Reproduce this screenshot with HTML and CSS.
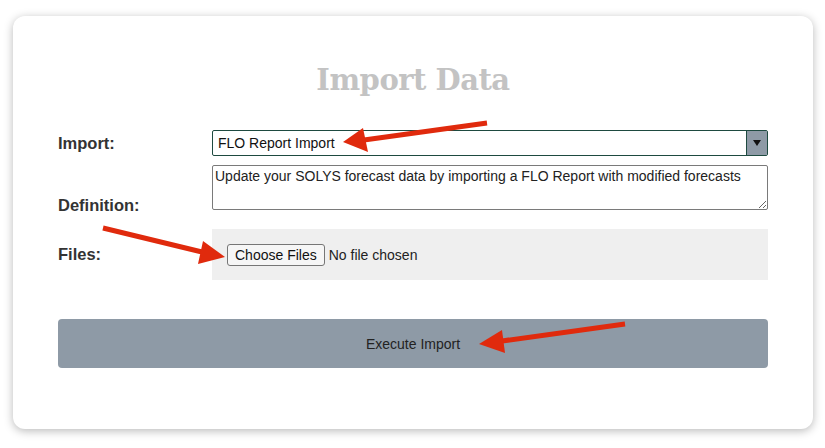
FILE: index.html
```html
<!DOCTYPE html>
<html lang="en">
<head>
    <meta charset="UTF-8">
    <meta name="viewport" content="width=device-width, initial-scale=1.0">
    <title>Import Data</title>
    <link rel="stylesheet" href="styles.css">
</head>
<body>
    <div class="page">
        <div class="card">
            <h1 class="card-title">Import Data</h1>

            <div class="form-row row-import">
                <label for="importType">Import:</label>
                <div class="select-box">
                    <select id="importType">
                        <option value="flo">FLO Report Import</option>
                    </select>
                    <span class="select-arrow"></span>
                </div>
            </div>

            <div class="form-row row-definition">
                <label for="definition" class="label-bottom">Definition:</label>
                <textarea id="definition" readonly>Update your SOLYS forecast data by importing a FLO Report with modified forecasts</textarea>
            </div>

            <div class="form-row row-files">
                <label for="files">Files:</label>
                <div class="files-box">
                    <input type="file" id="files" multiple>
                </div>
            </div>

            <button class="execute-btn" type="button">Execute Import</button>
        </div>

        <!-- стрелки-подсказки поверх формы -->
        <svg class="arrows" width="825" height="448" viewBox="0 0 825 448">
            <g fill="#e02a0d" stroke="#e02a0d" stroke-width="5" stroke-linecap="butt">
                <line x1="487" y1="123" x2="364" y2="140"/>
                <polygon points="343,142 363,128 368,152" stroke="none"/>

                <line x1="103" y1="228" x2="202" y2="252"/>
                <polygon points="225,257 203,241 198,264" stroke="none"/>

                <line x1="625" y1="324" x2="502" y2="341"/>
                <polygon points="479,344 502,330 505,353" stroke="none"/>
            </g>
        </svg>
    </div>
</body>
</html>
```

FILE: styles.css
```css
* {
    box-sizing: border-box;
    margin: 0;
    padding: 0;
}

body {
    font-family: 'Liberation Sans', Arial, sans-serif;
    background-color: #ffffff;
    color: #333333;
}

.page {
    position: relative;
    width: 825px;
    height: 448px;
    padding: 16px 0 0 13px;
}

.card {
    width: 800px;
    height: 413px;
    background-color: #ffffff;
    border-radius: 12px;
    box-shadow: 0 2px 10px rgba(0, 0, 0, 0.28);
    padding: 46px 45px 0 45px;
}

.card-title {
    font-family: 'DejaVu Serif', 'Liberation Serif', serif;
    font-size: 29px;
    line-height: 36px;
    font-weight: bold;
    color: #c3c3c3;
    text-align: center;
    letter-spacing: -0.5px;
    margin-bottom: 32px;
}

.form-row {
    display: grid;
    grid-template-columns: 154px 1fr;
    align-items: center;
}

.form-row label {
    font-size: 16.5px;
    font-weight: bold;
    color: #333333;
}

.row-import {
    margin-bottom: 9px;
}

.row-definition {
    margin-bottom: 19px;
}

.label-bottom {
    align-self: end;
    line-height: 18px;
    margin-bottom: -4px;
}

/* селект */
.select-box {
    display: flex;
    height: 26px;
    border: 1px solid #1e4a40;
    border-radius: 2px;
    background-color: #ffffff;
}

.select-box select {
    flex: 1;
    appearance: none;
    -webkit-appearance: none;
    border: none;
    background: transparent;
    font-family: 'Liberation Sans', Arial, sans-serif;
    font-size: 14px;
    color: #111111;
    padding: 0 5px;
    outline: none;
}

.select-arrow {
    width: 21px;
    background-color: #8e9aa6;
    border-left: 1px solid #1e4a40;
    display: flex;
    align-items: center;
    justify-content: center;
}

.select-arrow::after {
    content: '';
    border-left: 4px solid transparent;
    border-right: 4px solid transparent;
    border-top: 6px solid #111111;
}

textarea {
    height: 45px;
    width: 100%;
    border: 1px solid #7a7a7a;
    border-radius: 2px;
    font-family: 'Liberation Sans', Arial, sans-serif;
    font-size: 14px;
    line-height: 17px;
    color: #222222;
    padding: 2px 2px;
    outline: none;
}

/* выбор файлов */
.files-box {
    background-color: #efefef;
    height: 51px;
    padding: 15px 15px 0 15px;
}

.files-box input {
    font-family: 'Liberation Sans', Arial, sans-serif;
    font-size: 14px;
    color: #222222;
}

.files-box input::file-selector-button {
    font-family: 'Liberation Sans', Arial, sans-serif;
    font-size: 14px;
    height: 22px;
    padding: 0 7px;
    margin-right: 4px;
    background-color: #f6f6f6;
    border: 1px solid #767676;
    border-radius: 3px;
    color: #111111;
}

.execute-btn {
    display: block;
    width: 710px;
    height: 49px;
    margin-top: 39px;
    background-color: #8e9aa6;
    border: none;
    border-radius: 4px;
    font-family: 'Liberation Sans', Arial, sans-serif;
    font-size: 14px;
    color: #222222;
}

.arrows {
    position: absolute;
    top: 0;
    left: 0;
    pointer-events: none;
}
```
